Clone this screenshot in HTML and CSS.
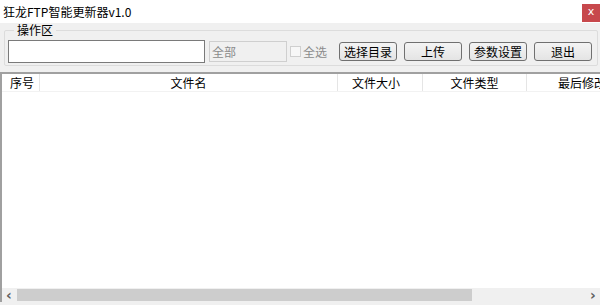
FILE: index.html
```html
<!DOCTYPE html>
<html lang="zh">
<head>
    <meta charset="UTF-8">
    <title>狂龙FTP智能更新器v1.0</title>
    <link rel="stylesheet" href="styles.css">
</head>
<body>
    <div class="window">
        <div class="titlebar">
            <span class="title">狂龙FTP智能更新器v1.0</span>
            <span class="close">x</span>
        </div>
        <div class="panel">
            <fieldset class="group">
                <legend>操作区</legend>
                <input type="text" class="path">
                <input type="text" class="filter" value="全部" disabled>
                <label class="check"><span class="box"></span>全选</label>
                <button class="btn btn-dir">选择目录</button>
                <button class="btn">上传</button>
                <button class="btn">参数设置</button>
                <button class="btn">退出</button>
            </fieldset>
        </div>
        <div class="list">
            <div class="list-head">
                <div class="col col-no">序号</div>
                <div class="col col-name">文件名</div>
                <div class="col col-size">文件大小</div>
                <div class="col col-type">文件类型</div>
                <div class="col col-time">最后修改</div>
            </div>
            <div class="list-body"></div>
            <div class="hscroll">
                <span class="arrow">&#8249;</span>
                <div class="track"><div class="thumb"></div></div>
                <span class="arrow">&#8250;</span>
            </div>
        </div>
    </div>
</body>
</html>
```

FILE: styles.css
```css
body {
    margin: 0;
    padding: 0;
    font-family: "Noto Sans CJK SC", "Liberation Sans", sans-serif;
    font-size: 12px;
    color: #000;
    background: #f0f0f0;
}
.window {
    width: 600px;
    height: 305px;
    display: flex;
    flex-direction: column;
    overflow: hidden;
}
.titlebar {
    height: 23px;
    background: #fff;
    display: flex;
    align-items: center;
    justify-content: space-between;
}
.title {
    padding-left: 3px;
    font-size: 12px;
}
.close {
    width: 18px;
    height: 18px;
    margin-top: 3px;
    background: #c7484c;
    color: #fff;
    font-family: "DejaVu Sans", sans-serif;
    font-size: 11px;
    line-height: 16px;
    text-align: center;
}
.panel {
    height: 49px;
    padding: 0 3px 0 4px;
    background: #f0f0f0;
}
.group {
    margin: 0;
    height: 43px;
    padding: 2px 5px 2px 3px;
    border: 1px solid #dcdcdc;
    border-radius: 2px;
    box-sizing: border-box;
    display: flex;
    align-items: center;
}
.group legend {
    padding: 0 3px;
    margin-left: 6px;
    font-size: 12px;
    line-height: 14px;
}
.group > * {
    flex-shrink: 0;
    white-space: nowrap;
}
.path {
    width: 197px;
    height: 23px;
    box-sizing: border-box;
    border: 1px solid #7a7a7a;
    background: #fff;
    margin: 0;
    padding: 0;
}
.filter {
    width: 78px;
    height: 21px;
    box-sizing: border-box;
    margin: 0 0 0 4px;
    padding: 0 2px;
    border: 1px solid #cfcfcf;
    background: #f0f0f0;
    color: #8b8b8b;
    font-family: inherit;
    font-size: 12px;
}
.check {
    display: flex;
    align-items: center;
    margin-left: 3px;
    color: #8b8b8b;
}
.box {
    width: 11px;
    height: 11px;
    box-sizing: border-box;
    border: 1px solid #cfcfcf;
    background: #f7f7f7;
    margin-right: 2px;
}
.btn {
    width: 58px;
    height: 19px;
    padding: 0;
    font-family: inherit;
    font-size: 12px;
    line-height: 15px;
    color: #000;
    border: 1px solid #707070;
    border-radius: 3px;
    background: linear-gradient(#f4f4f4, #e4e4e4);
    margin-left: 7px;
}
.btn-dir {
    margin-left: 12px;
}
.list {
    flex: 1;
    display: flex;
    flex-direction: column;
    background: #fff;
    border-top: 2px solid #a0a0a0;
    border-left: 2px solid #a0a0a0;
    margin-bottom: 3px;
}
.list-head {
    height: 17px;
    display: flex;
    border-bottom: 1px solid #f2f2f2;
    line-height: 17px;
}
.col {
    box-sizing: border-box;
    border-right: 1px solid #e5e5e5;
    padding: 0 4px;
    white-space: nowrap;
    overflow: hidden;
}
.col-no { width: 38px; padding-left: 8px; }
.col-name { width: 298px; text-align: center; }
.col-size { width: 85px; text-align: right; padding-right: 22px; }
.col-type { width: 104px; text-align: center; }
.col-time { flex: 1; border-right: none; padding-left: 31px; }
.list-body {
    flex: 1;
}
.hscroll {
    height: 14px;
    display: flex;
    align-items: center;
    background: #f0f0f0;
}
.arrow {
    width: 14px;
    text-align: center;
    font-family: "DejaVu Sans", sans-serif;
    font-weight: bold;
    font-size: 14px;
    color: #606060;
    line-height: 14px;
}
.track {
    flex: 1;
    height: 12px;
}
.thumb {
    width: 455px;
    height: 12px;
    background: #cdcdcd;
    margin-left: 1px;
}
```
